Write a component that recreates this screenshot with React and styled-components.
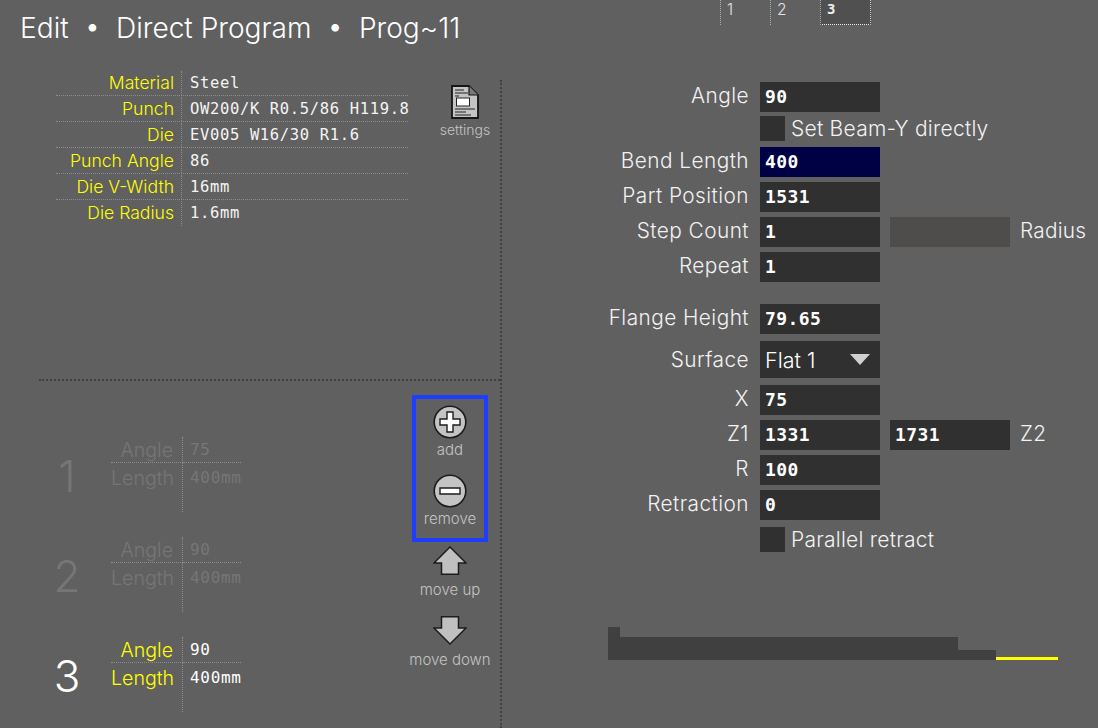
import React from "react";
import styled, { createGlobalStyle } from "styled-components";

const Global = createGlobalStyle`
  html, body { margin: 0; padding: 0; background: #606060; }
  #root { width: 1098px; height: 728px; overflow: hidden; }
`;
const sans = `Inter, "Liberation Sans", sans-serif`;
const mono = `"DejaVu Sans Mono", "Liberation Mono", monospace`;

const Page = styled.div`
  width: 1098px; height: 728px; background: #606060; font-family: ${sans};
  display: flex; flex-direction: column; color: #f2f2f2;
`;
const Header = styled.header`
  display: grid; grid-template-columns: 720px auto; height: 70px; flex: none;
`;
const Title = styled.h1`
  margin: 0; padding: 10px 0 0 20px; font-size: 28.1px; line-height: 36px; font-weight: 300;
  color: #fff; white-space: pre;
`;
const Tabs = styled.nav`display: flex; align-items: flex-start;`;
const Tab = styled.div`
  box-sizing: border-box; width: ${p => (p.$active ? 51 : 50)}px; height: 25px; padding: 0 0 0 6px;
  border-left: 1px dotted #b0b0b0; font-size: 15.5px; line-height: 19px; font-weight: 300; color: #e4e4e4;
  ${p => p.$active && `
    background: #505050; border-right: 1px dotted #c8c8c8; border-bottom: 1px dotted #eee;
    font-family: ${mono}; font-weight: 700; color: #eee; font-size: 14px;
  `}
`;
const Body = styled.main`display: flex; flex: 1; min-height: 0;`;
const LeftPane = styled.section`
  width: 500px; flex: none; display: flex; flex-direction: column;
`;
const VLine = styled.div`
  width: 0; flex: none; margin-top: 10px; border-left: 2px dotted #3f3f3f;
`;
const Top = styled.div`
  height: 309px; flex: none; display: flex; margin-left: 39px;
  border-bottom: 2px dotted #3f3f3f; padding-left: 17px;
`;
const InfoTable = styled.div`width: 352px; flex: none;`;
const InfoRow = styled.div`
  display: flex; height: 26px; box-sizing: border-box;
  border-bottom: ${p => (p.$last ? "none" : "1px dotted #8c8c8c")};
`;
const InfoLabel = styled.div`
  box-sizing: border-box; width: 126px; flex: none; padding-right: 7px; text-align: right;
  border-right: 1px dotted #8c8c8c; margin-top: 1px;
  color: #ffff00; font-size: 17.6px; line-height: 24px; font-weight: 300; white-space: nowrap;
`;
const InfoValue = styled.div`
  padding-left: 8px; font-family: ${mono}; font-size: 15.5px; line-height: 26px;
  letter-spacing: 0.65px; white-space: nowrap; color: #f4f4f4;
`;
const SettingsBtn = styled.div`
  width: 92px; box-sizing: border-box; padding: 15px 0 0 22px;
  display: flex; flex-direction: column; align-items: center;
`;
const ToolLabel = styled.div`
  font-size: 15px; line-height: 17px; color: #c4c4c4; font-weight: 300; white-space: nowrap; margin-top: ${p => p.$mt}px;
`;
const SettingsLabel = styled(ToolLabel)`font-size: 14px;`;
const Bottom = styled.div`flex: 1; display: flex; min-height: 0;`;
const Steps = styled.div`
  width: 400px; flex: none; padding-top: 56px; box-sizing: border-box;
  display: flex; flex-direction: column; gap: 25px;
`;
const Step = styled.div`
  display: flex; height: 75px; color: ${p => (p.$active ? "#fff" : "#767676")};
`;
const StepNum = styled.div`
  width: 56px; margin: 15px 16px 0 39px; flex: none; text-align: center;
  font-size: 44px; line-height: 48px; font-weight: 300; color: inherit;
`;
const StepTable = styled.div`
  width: 130px; flex: none; display: grid; grid-template-rows: 26px 1fr; grid-template-columns: 72px 58px;
`;
const StepLabel = styled.div`
  box-sizing: border-box; text-align: right; padding-right: 9px; font-size: 19.6px; font-weight: 300;
  line-height: ${p => (p.$first ? 27 : 31)}px; white-space: nowrap;
  border-right: 1px dotted #8c8c8c;
  border-bottom: ${p => (p.$first ? "1px dotted #8c8c8c" : "none")};
  color: ${p => (p.$active ? "#ffff00" : "#767676")};
`;
const StepValue = styled.div`
  padding-left: 7px; font-family: ${mono}; font-size: 16px; white-space: nowrap; letter-spacing: 0.7px;
  line-height: ${p => (p.$first ? 26 : 30)}px;
  border-bottom: ${p => (p.$first ? "1px dotted #8c8c8c" : "none")};
  color: ${p => (p.$active ? "#fff" : "#767676")};
`;
const Actions = styled.div`
  width: 100px; flex: none; padding-top: 14px; display: flex; flex-direction: column; align-items: center;
`;
const Highlight = styled.div`
  width: 76px; height: 147px; box-sizing: border-box; border: 4px solid #1f3dff; padding-top: 6px;
  display: flex; flex-direction: column; align-items: center; gap: 11px; margin-bottom: 4px;
`;
const Tool = styled.div`
  display: flex; flex-direction: column; align-items: center; height: ${p => p.$h}px;
`;
const RightPane = styled.section`flex: 1; padding-top: 12px; display: flex; flex-direction: column;`;
const Row = styled.div`
  display: grid; grid-template-columns: 258px 120px 120px auto;
  height: ${p => p.$h || 30}px; margin-top: ${p => p.$mt || 0}px; align-items: stretch;
`;
const Label = styled.label`
  padding-right: 11px; text-align: right; font-size: 20.8px; font-weight: 300; letter-spacing: 0.45px;
  line-height: ${p => p.$lh || 28}px; white-space: nowrap; color: #f2f2f2; grid-column: 1;
`;
const Input = styled.div`
  grid-column: ${p => (p.$second ? 3 : 2)};
  box-sizing: border-box; width: 120px; margin-left: ${p => (p.$second ? 10 : 0)}px;
  padding-left: 5px; background: ${p => (p.$focus ? "#000044" : p.$disabled ? "#4e4d4b" : "#303030")};
  font-family: ${mono}; font-weight: 700; font-size: 18px; letter-spacing: 0.4px; line-height: 30px; color: #fff;
`;
const SideLabel = styled.div`
  grid-column: 4; padding-left: 20px; font-size: 20.8px; font-weight: 300; letter-spacing: 0.25px;
  line-height: 28px; white-space: nowrap; color: #f2f2f2;
`;
const CheckRow = styled.div`
  grid-column: 2 / 5; display: flex; align-items: center; gap: 6px;
  font-size: 21px; font-weight: 300; letter-spacing: 0.25px; color: #f2f2f2; white-space: nowrap;
`;
const Check = styled.span`display: block; width: 25px; height: 25px; background: #303030; flex: none;`;
const Select = styled.div`
  grid-column: 2; background: #303030; display: flex; align-items: center; justify-content: space-between;
  padding: 0 10px 0 5px; font-size: 21.5px; font-weight: 300; color: #fff;
`;
const Shape = styled.svg`display: block; margin: 75px 0 0 106px;`;

const DocIcon = () => (
  <svg width="28" height="34" viewBox="0 0 28 34">
    <path d="M1 1H18L27 10V33H1Z" fill="#c4c4c4" stroke="#161616" strokeWidth="1.8" />
    <path d="M18 1V10H27" fill="#7a7a7a" stroke="#161616" strokeWidth="1.2" />
    <path d="M4 5H13M4 8H17M4 11H8" stroke="#222" strokeWidth="1" />
    <rect x="5.5" y="13" width="13" height="8" fill="#fff" stroke="#222" />
    <path d="M4 24H24M4 27H15M4 30H20" stroke="#222" strokeWidth="1" />
  </svg>
);
const CircleIcon = ({ plus }) => (
  <svg width="34" height="34" viewBox="0 0 34 34">
    <circle cx="17" cy="17" r="15.8" fill="#c4c4c4" stroke="#1c1c1c" strokeWidth="1.6" />
    <path
      d={plus ? "M14 7H20V14H27V20H20V27H14V20H7V14H14Z" : "M7 14H27V20H7Z"}
      fill="#fff" stroke="#1c1c1c" strokeWidth="1.4"
    />
  </svg>
);
const ArrowIcon = ({ down }) => (
  <svg width="34" height="29" viewBox="0 0 34 29" style={down ? { transform: "scaleY(-1)" } : undefined}>
    <path d="M17 1L33 17H25.5V28.2H8.5V17H1Z" fill="#c0c0c0" stroke="#1c1c1c" strokeWidth="1.5" />
  </svg>
);

const info = [
  ["Material", "Steel"],
  ["Punch", "OW200/K R0.5/86 H119.8"],
  ["Die", "EV005 W16/30 R1.6"],
  ["Punch Angle", "86"],
  ["Die V-Width", "16mm"],
  ["Die Radius", "1.6mm"],
];
const steps = [
  { n: 1, angle: 75 },
  { n: 2, angle: 90 },
  { n: 3, angle: 90, active: true },
];

export default function App() {
  return (
    <Page>
      <Global />
      <Header>
        <Title>{"Edit  •  Direct Program  •  Prog~11"}</Title>
        <Tabs>
          <Tab>1</Tab>
          <Tab>2</Tab>
          <Tab $active>3</Tab>
        </Tabs>
      </Header>
      <Body>
        <LeftPane>
          <Top>
            <InfoTable>
              {info.map(([l, v], i) => (
                <InfoRow key={l} $last={i === info.length - 1}>
                  <InfoLabel>{l}</InfoLabel>
                  <InfoValue>{v}</InfoValue>
                </InfoRow>
              ))}
            </InfoTable>
            <SettingsBtn>
              <DocIcon />
              <SettingsLabel $mt={2}>settings</SettingsLabel>
            </SettingsBtn>
          </Top>
          <Bottom>
            <Steps>
              {steps.map(s => (
                <Step key={s.n} $active={s.active}>
                  <StepNum>{s.n}</StepNum>
                  <StepTable>
                    <StepLabel $first $active={s.active}>Angle</StepLabel>
                    <StepValue $first $active={s.active}>{s.angle}</StepValue>
                    <StepLabel $active={s.active}>Length</StepLabel>
                    <StepValue $active={s.active}>400mm</StepValue>
                  </StepTable>
                </Step>
              ))}
            </Steps>
            <Actions>
              <Highlight>
                <Tool $h={58}><CircleIcon plus /><ToolLabel $mt={2}>add</ToolLabel></Tool>
                <Tool $h={58}><CircleIcon /><ToolLabel $mt={2}>remove</ToolLabel></Tool>
              </Highlight>
              <Tool $h={70}><ArrowIcon /><ToolLabel $mt={6}>move up</ToolLabel></Tool>
              <Tool $h={70}><ArrowIcon down /><ToolLabel $mt={6}>move down</ToolLabel></Tool>
            </Actions>
          </Bottom>
        </LeftPane>
        <VLine />
        <RightPane>
          <Row><Label>Angle</Label><Input>90</Input></Row>
          <Row $h={25} $mt={4}><CheckRow><Check />Set Beam-Y directly</CheckRow></Row>
          <Row $mt={6}><Label>Bend Length</Label><Input $focus>400</Input></Row>
          <Row $mt={5}><Label>Part Position</Label><Input>1531</Input></Row>
          <Row $mt={5}><Label>Step Count</Label><Input>1</Input><Input $second $disabled /><SideLabel>Radius</SideLabel></Row>
          <Row $mt={5}><Label>Repeat</Label><Input>1</Input></Row>
          <Row $mt={22}><Label>Flange Height</Label><Input>79.65</Input></Row>
          <Row $h={36} $mt={7}>
            <Label $lh={37}>Surface</Label>
            <Select>Flat 1
              <svg width="20" height="11" viewBox="0 0 20 11"><path d="M0 0H20L10 11Z" fill="#d0d0d0" /></svg>
            </Select>
          </Row>
          <Row $mt={8}><Label>X</Label><Input>75</Input></Row>
          <Row $mt={5}><Label>Z1</Label><Input>1331</Input><Input $second>1731</Input><SideLabel>Z2</SideLabel></Row>
          <Row $mt={5}><Label>R</Label><Input>100</Input></Row>
          <Row $mt={5}><Label>Retraction</Label><Input>0</Input></Row>
          <Row $h={25} $mt={7}><CheckRow><Check />Parallel retract</CheckRow></Row>
          <Shape width="450" height="33" viewBox="0 0 450 33">
            <path d="M0 0H12V10H350V23H388V33H0Z" fill="#404040" />
            <rect x="388" y="30" width="62" height="3" fill="#ffff00" />
          </Shape>
        </RightPane>
      </Body>
    </Page>
  );
}
